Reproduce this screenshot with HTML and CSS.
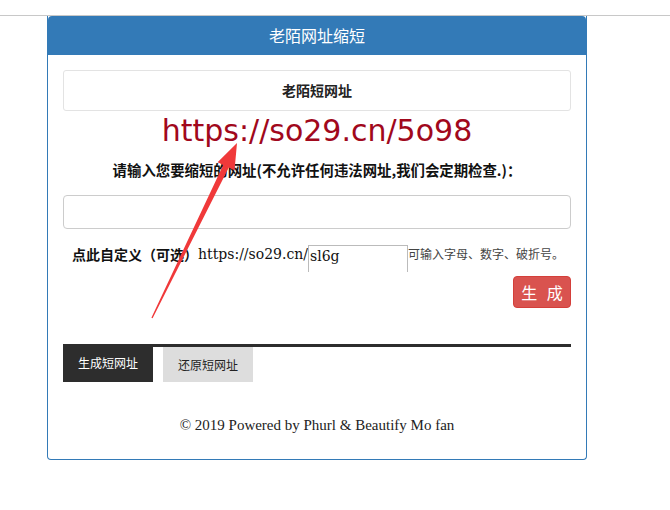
FILE: index.html
```html
<!DOCTYPE html>
<html lang="zh-CN">
  <head>
    <meta charset="UTF-8" />
    <title>老陌网址缩短</title>
    <link rel="stylesheet" href="styles.css">
  </head>
  <body>
    <div class="topline"></div>
    <div class="panel">
      <div class="panelHeading">老陌网址缩短</div>
      <div class="panelBody">
        <div class="brand">老陌短网址</div>
        <div class="result">https://so29.cn/5o98</div>
        <div class="prompt">请输入您要缩短的网址(不允许任何违法网址,我们会定期检查.)：</div>
        <input class="urlInput" type="text" />
        <div class="customRow">
          <b class="customLabel">点此自定义（可选）</b>
          <span class="prefix">https://so29.cn/</span>
          <input class="alias" type="text" value="sl6g" />
          <span class="hint">可输入字母、数字、破折号。</span>
        </div>
        <div class="actions">
          <button class="btnGen">生 成</button>
        </div>
        <div class="tabs">
          <span class="tab active">生成短网址</span>
          <span class="tab">还原短网址</span>
        </div>
        <div class="footer">© 2019 Powered by Phurl &amp; Beautify Mo fan</div>
      </div>
    </div>

    <svg class="arrow" width="670" height="510" viewBox="0 0 670 510">
      <polygon fill="#f0393a" points="237,143 234.5,170.5 228.8,167.6 152.6,318.3 151.4,317.7 223.2,165 217.6,162.3" />
    </svg>
  </body>
</html>
```

FILE: styles.css
```css
body {
  margin: 0;
  background: #fff;
  font-family: "Noto Sans CJK SC", sans-serif;
  color: #333;
}
.topline {
  height: 15px;
  border-bottom: 1px solid #c8c8c8;
}
.panel {
  width: 538px;
  margin-left: 47px;
  border: 1px solid #337ab7;
  border-top: none;
  border-radius: 0 0 4px 4px;
}
.panelHeading {
  background: #337ab7;
  color: #fff;
  text-align: center;
  font-size: 16px;
  line-height: 19px;
  padding: 10px 15px;
  border-radius: 4px 4px 0 0;
}
.panelBody {
  padding: 15px 15px 23px;
}
.brand {
  border: 1px solid #e3e3e3;
  border-radius: 3px;
  text-align: center;
  font-weight: bold;
  font-size: 14px;
  line-height: 20px;
  padding: 9px 0 10px;
  color: #222;
}
.result {
  text-align: center;
  font-family: "DejaVu Sans", sans-serif;
  font-size: 30px;
  line-height: 40px;
  color: #a1081c;
}
.prompt {
  margin-top: 8px;
  text-align: center;
  font-weight: bold;
  font-size: 14.4px;
  line-height: 22px;
  color: #111;
}
.urlInput {
  display: block;
  box-sizing: border-box;
  width: 100%;
  height: 34px;
  margin-top: 14px;
  border: 1px solid #ccc;
  border-radius: 4px;
}
.customRow {
  display: flex;
  align-items: flex-start;
  margin-top: 14px;
  padding-left: 9px;
  line-height: 22px;
}
.customLabel {
  font-size: 14px;
  color: #111;
}
.prefix {
  font-family: "DejaVu Serif", serif;
  font-size: 14px;
  color: #111;
}
.alias {
  box-sizing: border-box;
  width: 100px;
  height: 27px;
  margin: 2px 0 0;
  padding: 0 0 6px 1px;
  border: 1px solid #bbb;
  border-bottom: none;
  font-family: "DejaVu Serif", serif;
  font-size: 14px;
  color: #111;
}
.hint {
  font-size: 12px;
  color: #444;
}
.actions {
  display: flex;
  justify-content: flex-end;
  margin-top: 4px;
}
.btnGen {
  width: 58px;
  height: 32px;
  border: 1px solid #d43f3a;
  border-radius: 4px;
  background: #d9534f;
  color: #fff;
  font-family: "Noto Sans CJK SC", sans-serif;
  font-size: 16px;
  letter-spacing: 3px;
  padding: 0 0 0 3px;
}
.tabs {
  display: flex;
  gap: 10px;
  margin-top: 36px;
  border-top: 3px solid #2d2d2d;
}
.tab {
  width: 90px;
  height: 35px;
  line-height: 35px;
  text-align: center;
  font-size: 12px;
  background: #ddd;
  color: #222;
}
.tab.active {
  margin-top: -3px;
  height: 38px;
  line-height: 38px;
  background: #2d2d2d;
  color: #fff;
}
.footer {
  margin-top: 32px;
  text-align: center;
  font-family: "Liberation Serif", serif;
  font-size: 15px;
  line-height: 22px;
  color: #222;
}
.arrow {
  position: absolute;
  top: 0;
  left: 0;
  pointer-events: none;
}
```
